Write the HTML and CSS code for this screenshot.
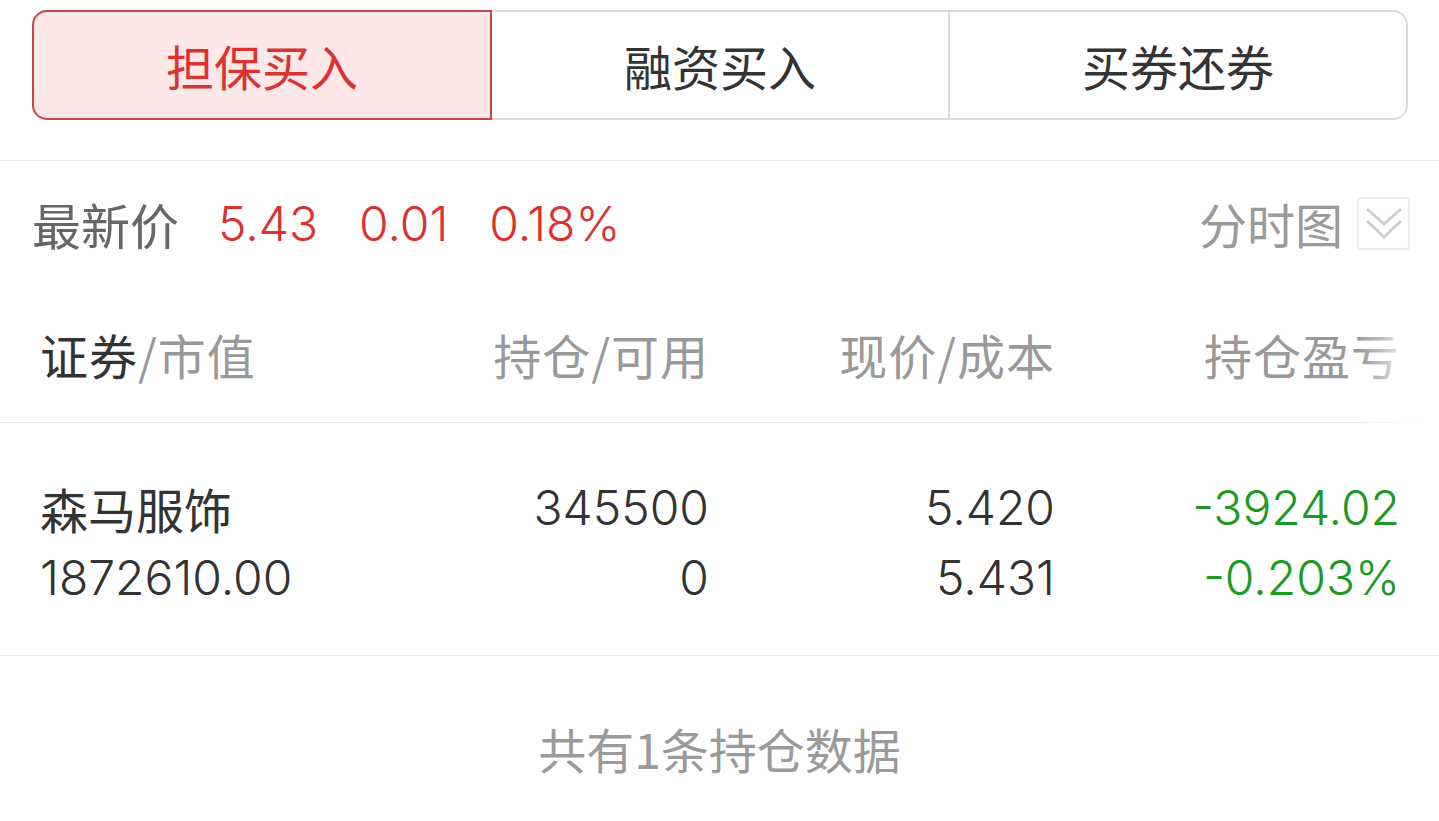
FILE: index.html
```html
<!DOCTYPE html>
<html>
<head>
  <title>持仓</title>
  <link rel="stylesheet" href="styles.css">
</head>
<body>
  <div class="page">
    <div class="tabs">
      <div class="tab active">担保买入</div>
      <div class="tab">融资买入</div>
      <div class="tab">买券还券</div>
    </div>

    <div class="quote">
      <span class="quote-label">最新价</span>
      <span class="num up">5.43</span>
      <span class="num up">0.01</span>
      <span class="num up">0.18%</span>
      <span class="spacer"></span>
      <span class="chart-label">分时图</span>
      <span class="chart-toggle">
        <svg width="49" height="49" viewBox="0 0 49 49">
          <polyline points="8,10 25,25 42,10" fill="none" stroke="#cccccc" stroke-width="2.5"/>
          <polyline points="8,22 25,38 42,22" fill="none" stroke="#cccccc" stroke-width="2.5"/>
        </svg>
      </span>
    </div>

    <div class="table">
      <div class="thead">
        <div class="cell first"><span class="dark">证券</span>/市值</div>
        <div class="cell">持仓/可用</div>
        <div class="cell">现价/成本</div>
        <div class="cell">持仓盈亏</div>
      </div>
      <div class="trow">
        <div class="cell first">
          <div class="cjk">森马服饰</div>
          <div class="num">1872610.00</div>
        </div>
        <div class="cell">
          <div class="num">345500</div>
          <div class="num">0</div>
        </div>
        <div class="cell">
          <div class="num">5.420</div>
          <div class="num">5.431</div>
        </div>
        <div class="cell down">
          <div class="num">-3924.02</div>
          <div class="num">-0.203%</div>
        </div>
      </div>
    </div>

    <div class="footer">共有1条持仓数据</div>
  </div>
</body>
</html>
```

FILE: styles.css
```css
body {
  margin: 0;
  background: #fff;
  font-family: "Noto Sans CJK SC", sans-serif;
  color: #333;
}

.page {
  width: 1439px;
  overflow: hidden;
}

.num {
  font-family: Inter, "Noto Sans CJK SC", sans-serif;
  font-weight: 300;
}

.up {
  color: #d93230;
}

.down {
  color: #1b9a1f;
}

/* segmented tabs */
.tabs {
  display: flex;
  margin: 10px 31px 0 32px;
  height: 110px;
  border: 2px solid #dcdcdc;
  border-radius: 15px;
  box-sizing: border-box;
}

.tab {
  flex: 1;
  display: flex;
  align-items: center;
  justify-content: center;
  font-size: 48px;
  color: #333;
  border-left: 2px solid #dcdcdc;
}

.tab:first-child {
  border-left: none;
}

.tab.active {
  margin: -2px 0 -2px -2px;
  color: #d93230;
  background-color: #fde7e7;
  border: 2px solid #c5474b;
  border-radius: 15px 0 0 15px;
}

.tab.active + .tab {
  border-left: none;
}

/* quote line */
.quote {
  display: flex;
  align-items: center;
  margin-top: 40px;
  height: 124px;
  padding: 0 29px 0 32px;
  border-top: 1px solid #ececec;
}

.quote-label {
  font-size: 49px;
  color: #666;
  margin-right: 39px;
}

.quote .num {
  font-size: 48px;
  margin-right: 41px;
}

.spacer {
  flex: 1;
}

.chart-label {
  font-size: 48px;
  color: #9a9a9a;
  margin-right: 14px;
}

.chart-toggle {
  display: flex;
  width: 53px;
  height: 53px;
  box-sizing: border-box;
  border: 2px solid #eeeeee;
  border-radius: 3px;
  align-items: center;
  justify-content: center;
}

.chart-toggle svg {
  flex: none;
}

/* positions table */
.thead,
.trow {
  display: grid;
  grid-template-columns: 362px 307px 346px 345px;
  padding-left: 40px;
}

.thead {
  position: relative;
  height: 137px;
  align-items: center;
  font-size: 48px;
  color: #999;
  border-bottom: 1px solid #ececec;
}

.thead .cell {
  letter-spacing: 1px;
}

.thead::after {
  content: "";
  position: absolute;
  top: 0;
  right: 0;
  width: 80px;
  height: 138px;
  background: linear-gradient(to right, rgba(255, 255, 255, 0), #fff 75%);
}

.thead .dark {
  color: #333;
}

.cell {
  text-align: right;
}

.cell.first {
  text-align: left;
}

.trow {
  padding-top: 50px;
  padding-bottom: 42px;
  border-bottom: 1px solid #ececec;
}

.trow .cjk,
.trow .num {
  height: 70px;
  line-height: 70px;
  font-size: 48px;
}

.footer {
  text-align: center;
  font-size: 48px;
  color: #9a9a9a;
  padding-top: 57px;
}
```
